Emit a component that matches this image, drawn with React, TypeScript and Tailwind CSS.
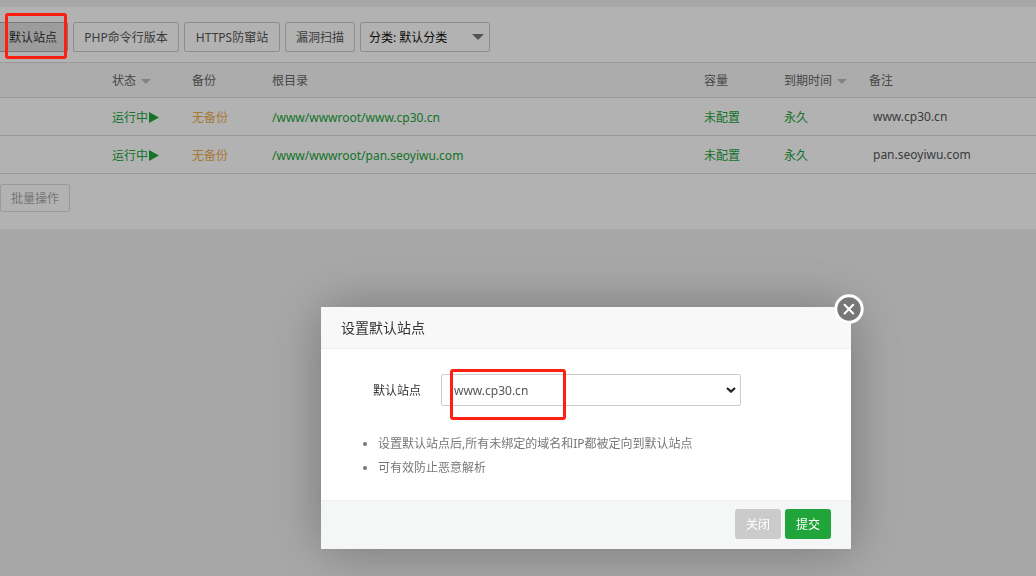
import type { ReactNode } from 'react';

const toolButton =
  'h-[30px] rounded-[2px] border border-[#ccc] bg-white pt-[2px] text-center text-[#555] whitespace-nowrap';

type Site = { path: string; note: string };

const sites: Site[] = [
  { path: '/www/wwwroot/www.cp30.cn', note: 'www.cp30.cn' },
  { path: '/www/wwwroot/pan.seoyiwu.com', note: 'pan.seoyiwu.com' },
];

function Triangle({ className }: { className: string }) {
  return (
    <svg viewBox="0 0 12 6" className={className} fill="currentColor" aria-hidden="true">
      <path d="M0 0h12L6 6z" />
    </svg>
  );
}

function SortHeader({ children }: { children: ReactNode }) {
  return (
    <button type="button" className="flex items-center gap-[5px]">
      {children}
      <Triangle className="h-[5px] w-[10px] text-[#bbb]" />
    </button>
  );
}

function Toolbar() {
  return (
    <div className="flex h-[30px] gap-[5px]">
      <button
        type="button"
        className="h-[30px] rounded-r-[2px] border border-l-0 border-[#adadad] bg-[#e0e0e0] pt-[2px] pr-[10px] pl-[9px] whitespace-nowrap text-[#333]"
      >
        默认站点
      </button>
      <button type="button" className={`${toolButton} w-[106px]`}>PHP命令行版本</button>
      <button type="button" className={`${toolButton} w-[96px]`}>HTTPS防窜站</button>
      <button type="button" className={`${toolButton} w-[70px]`}>漏洞扫描</button>
      <div className="relative w-[130px]">
        <select
          aria-label="分类"
          className="h-[30px] w-full appearance-none rounded-[2px] border border-[#ccc] bg-white pt-[2px] pl-[8px] text-[#111]"
        >
          <option>分类: 默认分类</option>
        </select>
        <Triangle className="pointer-events-none absolute top-[12px] right-[6px] h-[6px] w-[12px] text-[#777]" />
      </div>
    </div>
  );
}

function SiteTable() {
  return (
    <table className="w-full table-fixed border-collapse text-left">
      <colgroup>
        <col className="w-[104px]" />
        <col className="w-[80px]" />
        <col className="w-[80px]" />
        <col />
        <col className="w-[80px]" />
        <col className="w-[85px]" />
        <col className="w-[175px]" />
      </colgroup>
      <thead>
        <tr className="h-[35px] border-y border-[#ddd] bg-[#f6f6f6] text-[#666]">
          <td />
          <th className="px-2 pt-[2px] font-normal"><SortHeader>状态</SortHeader></th>
          <th className="px-2 pt-[2px] font-normal">备份</th>
          <th className="px-2 pt-[2px] font-normal">根目录</th>
          <th className="px-2 pt-[2px] font-normal">容量</th>
          <th className="pt-[2px] pl-2 font-normal whitespace-nowrap"><SortHeader>到期时间</SortHeader></th>
          <th className="px-2 pt-[2px] font-normal">备注</th>
        </tr>
      </thead>
      <tbody>
        {sites.map((site) => (
          <tr key={site.path} className="h-[38px] border-b border-[#ddd] text-[#20a53a]">
            <td />
            <td className="px-2 pt-[2px]">
              <a href="#status" className="flex items-center gap-px whitespace-nowrap">
                运行中
                <svg viewBox="0 0 10 11" className="h-[11px] w-[10px]" fill="currentColor" aria-hidden="true">
                  <path d="M0 0l10 5.5L0 11z" />
                </svg>
              </a>
            </td>
            <td className="px-2 pt-[2px]"><a href="#backup" className="text-[#f0ad4e]">无备份</a></td>
            <td className="px-2 pt-[2px]"><a href="#path">{site.path}</a></td>
            <td className="px-2 pt-[2px]"><a href="#quota">未配置</a></td>
            <td className="px-2 pt-[2px]"><a href="#expire">永久</a></td>
            <td className="px-3">
              <input
                aria-label="备注"
                defaultValue={site.note}
                className="block w-full bg-transparent text-[#555]"
              />
            </td>
          </tr>
        ))}
      </tbody>
    </table>
  );
}

function Dialog() {
  return (
    <div
      role="dialog"
      aria-labelledby="dialog-title"
      className="relative w-[530px] bg-white shadow-[1px_1px_50px_rgba(0,0,0,0.3)]"
    >
      <h2
        id="dialog-title"
        className="flex h-[42px] items-center border-b border-[#eee] bg-[#f8f8f8] px-5 text-[14px] text-[#333]"
      >
        设置默认站点
      </h2>
      <button type="button" aria-label="关闭窗口" className="absolute -top-[13px] -right-[13px] size-[30px]">
        <svg viewBox="0 0 30 30" className="size-[30px]" fill="none" stroke="#fff" aria-hidden="true">
          <circle cx="15" cy="15" r="13.2" fill="#777" strokeWidth="3" />
          <path d="M10.6 10.8l8.6 8.6M19.2 10.8l-8.6 8.6" strokeWidth="2.1" strokeLinecap="round" />
        </svg>
      </button>

      <div className="flex items-center pt-[25px]">
        <label htmlFor="default-site" className="w-[100px] pt-[2px] text-right text-[#333]">默认站点</label>
        <div className="relative ml-5 w-[300px]">
          <select
            id="default-site"
            className="block h-8 w-full appearance-none rounded-[2px] border border-[#ccc] bg-white pt-[2px] pl-3 text-[#555]"
          >
            <option>www.cp30.cn</option>
            <option>pan.seoyiwu.com</option>
          </select>
          <svg
            viewBox="0 0 10 6"
            className="pointer-events-none absolute top-[13px] right-[5px] h-[6px] w-[10px]"
            fill="none"
            stroke="#222"
            strokeWidth="2.2"
            aria-hidden="true"
          >
            <path d="M1 1l4 3.6L9 1" />
          </svg>
          <div className="pointer-events-none absolute -top-[5px] left-[9px] h-[51px] w-[116px] rounded-[3px] border-[3px] border-[#ff1f10]" />
        </div>
      </div>

      <ul className="mt-[26px] list-disc pb-5 pl-[57px] leading-6 text-[#777]">
        <li>设置默认站点后,所有未绑定的域名和IP都被定向到默认站点</li>
        <li>可有效防止恶意解析</li>
      </ul>

      <div className="flex h-[49px] items-start justify-end gap-1 border-t border-[#edf1f2] bg-[#f5f7f7] px-5 pt-2">
        <button type="button" className="h-[30px] rounded-[3px] bg-[#cbcbcb] px-[11px] pt-[2px] text-white">关闭</button>
        <button type="button" className="h-[30px] rounded-[3px] bg-[#20a53a] px-[11px] pt-[2px] text-white">提交</button>
      </div>
    </div>
  );
}

export default function App() {
  return (
    <div className="min-h-screen bg-[#f0f0f0] pt-[7px] font-['Noto_Sans','Noto_Sans_CJK_SC',sans-serif] text-[12px]">
      <main className="bg-white pt-[15px] pb-[17px]">
        <Toolbar />
        <div className="mt-[10px]">
          <SiteTable />
        </div>
        <button
          type="button"
          className="mt-[10px] block h-7 rounded-[2px] border border-[#ddd] bg-white px-[10px] pt-[2px] text-[#aaa]"
        >
          批量操作
        </button>
      </main>

      <div className="fixed inset-0 flex items-start justify-end bg-black/30 pt-[307px] pr-[185px]">
        <Dialog />
      </div>
      <div className="pointer-events-none absolute top-[13px] left-[5px] h-[46px] w-[62px] rounded-[3px] border-[3px] border-[#ff1f10]" />
    </div>
  );
}
